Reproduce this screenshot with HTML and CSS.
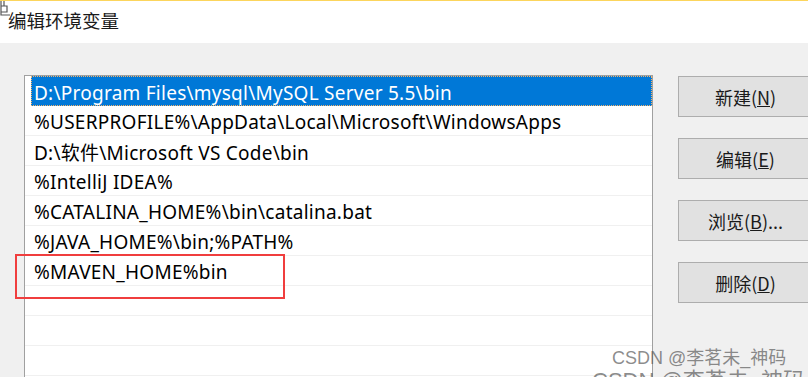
FILE: index.html
```html
<!DOCTYPE html>
<html lang="zh-CN">
<head>
  <meta charset="UTF-8">
  <title>编辑环境变量</title>
  <link rel="stylesheet" href="styles.css">
</head>
<body>
  <div class="titlebar">
    <svg class="app-icon" width="12" height="16" viewBox="0 0 12 16">
      <path d="M1 0v14h9M1 5h6v6H1M4 0v5" fill="none" stroke="#555" stroke-width="1.2"/>
    </svg>
    <span class="title">编辑环境变量</span>
  </div>

  <div class="dialog">
    <div class="listbox">
      <div class="row selected"><span>D:\Program Files\mysql\MySQL Server 5.5\bin</span></div>
      <div class="row"><span>%USERPROFILE%\AppData\Local\Microsoft\WindowsApps</span></div>
      <div class="row"><span>D:\软件\Microsoft VS Code\bin</span></div>
      <div class="row"><span>%IntelliJ IDEA%</span></div>
      <div class="row"><span>%CATALINA_HOME%\bin\catalina.bat</span></div>
      <div class="row"><span>%JAVA_HOME%\bin;%PATH%</span></div>
      <div class="row"><span>%MAVEN_HOME%bin</span></div>
      <div class="row"></div>
      <div class="row"></div>
      <div class="row"></div>
    </div>

    <div class="buttons">
      <button class="btn">新建(<u>N</u>)</button>
      <button class="btn">编辑(<u>E</u>)</button>
      <button class="btn">浏览(<u>B</u>)...</button>
      <button class="btn">删除(<u>D</u>)</button>
    </div>
  </div>

  <div class="highlight"></div>
  <div class="watermark">CSDN @李茗未_神码</div>
  <div class="watermark second">CSDN @李茗未_神码</div>
</body>
</html>
```

FILE: styles.css
```css
* {
  margin: 0;
  padding: 0;
  box-sizing: border-box;
}

body {
  width: 808px;
  height: 377px;
  overflow: hidden;
  position: relative;
  background: #f0f0f0;
  font-family: "Noto Sans", "Noto Sans CJK SC", sans-serif;
  color: #000;
}

.titlebar {
  height: 43px;
  background: #fff;
  border-top: 1px solid #fcd55c;
  display: flex;
  align-items: center;
  padding: 0 0 5px 8px;
  position: relative;
}

.app-icon {
  position: absolute;
  left: 0;
  top: 0;
}

.title {
  font-family: "Noto Sans CJK SC", sans-serif;
  font-size: 18.5px;
  color: #1a1a1a;
}

.dialog {
  display: flex;
  padding: 32px 0 0 24px;
}

.listbox {
  width: 629px;
  height: 320px;
  background: #fff;
  border: 1px solid #a0a0a0;
  border-bottom: none;
  flex-shrink: 0;
}

.row {
  height: 30px;
  border-bottom: 1px solid #f0f0f0;
  padding: 3px 0 0 9px;
  display: flex;
  align-items: center;
  font-size: 19px;
  letter-spacing: 0.25px;
  white-space: nowrap;
  overflow: hidden;
}

.row.selected {
  margin-left: 6px;
  padding-left: 2px;
  background: #0078d7;
  color: #fff;
  border: 1px dotted #f5b36b;
}

.buttons {
  display: flex;
  flex-direction: column;
  gap: 21px;
  margin-left: 25px;
  padding-top: 1px;
}

.btn {
  width: 135px;
  height: 41px;
  background: #e1e1e1;
  border: 1px solid #adadad;
  font-family: "Noto Sans CJK SC", sans-serif;
  font-size: 18px;
  color: #1a1a1a;
}

.highlight {
  position: absolute;
  left: 15px;
  top: 254px;
  width: 270px;
  height: 45px;
  border: 2px solid #f03e3e;
}

.watermark {
  position: absolute;
  left: 612px;
  top: 343px;
  font-size: 18px;
  color: rgba(90, 90, 90, 0.7);
  font-family: "Liberation Sans", "Noto Sans CJK SC", sans-serif;
  white-space: nowrap;
}

.watermark.second {
  left: 592px;
  top: 362px;
  font-size: 22px;
}
```
